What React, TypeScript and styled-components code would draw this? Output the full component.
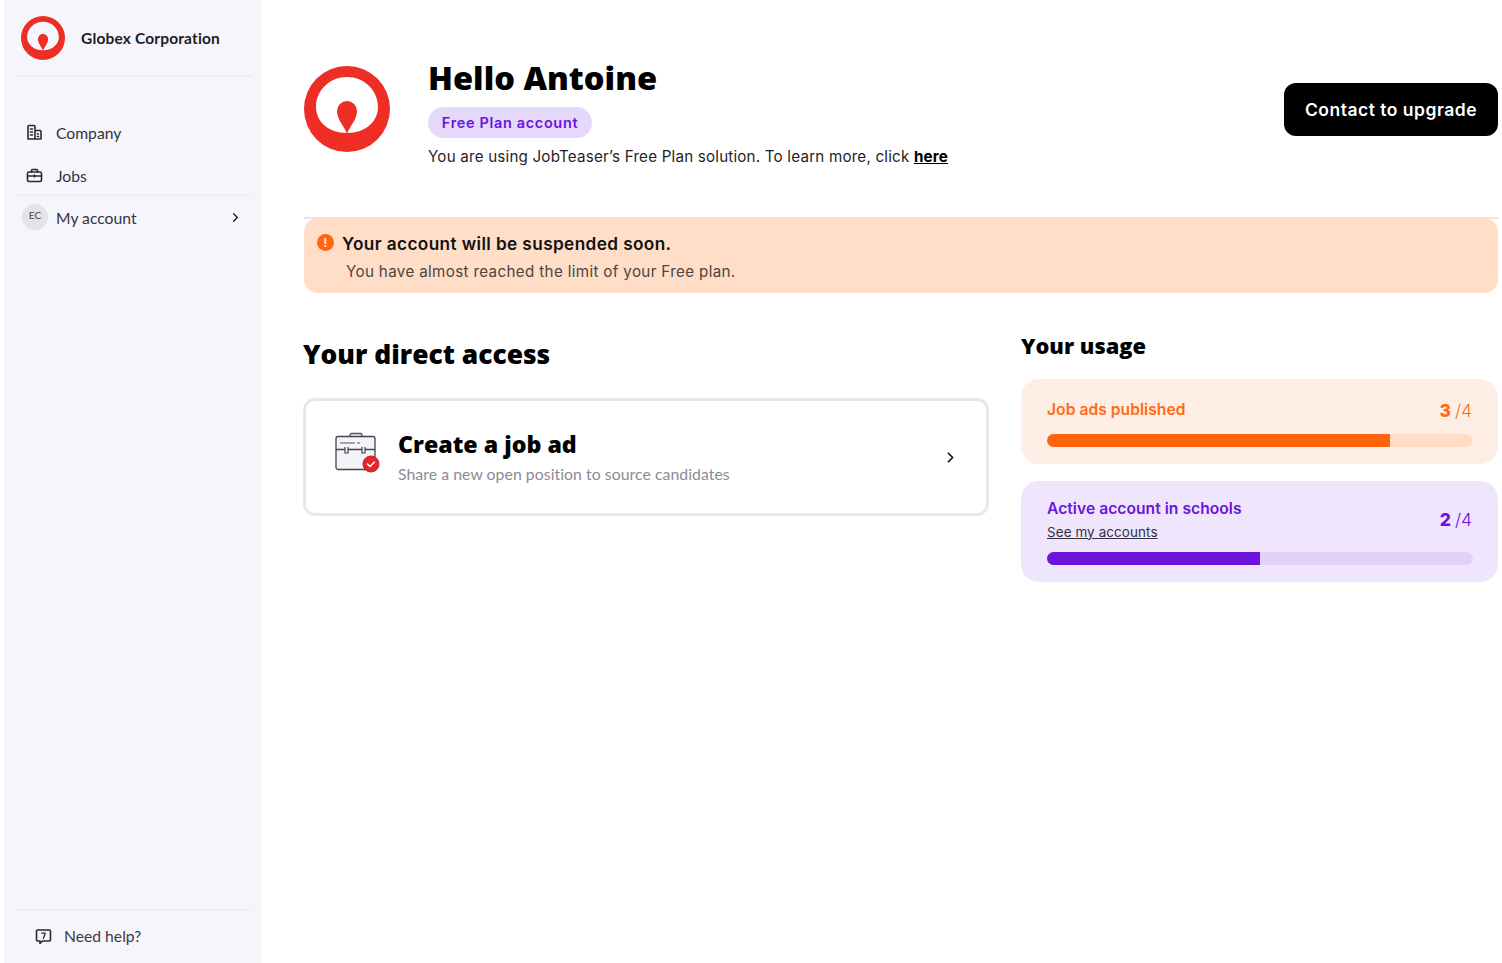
import styled, { createGlobalStyle } from 'styled-components';
import { ChevronRight } from 'lucide-react';

const GlobalStyle = createGlobalStyle`
  html, body {
    margin: 0;
    padding: 0;
    background: #fff;
    color: #000;
    font-family: "Inter", "Liberation Sans", sans-serif;
  }
  * { box-sizing: border-box; }
`;

const Page = styled.div`
  display: flex;
  height: 963px;
  overflow: hidden;
  padding-left: 4px;
`;

const Sidebar = styled.aside`
  display: flex;
  flex-direction: column;
  width: 257px;
  flex-shrink: 0;
  background: #f5f5fb;
  padding: 0 9px 0 10px;
`;

const Brand = styled.div`
  display: flex;
  align-items: center;
  gap: 16px;
  height: 77px;
  padding: 1px 0 0 7px;
  border-bottom: 2px solid #eeeef4;
  font-family: "Lato", sans-serif;
  font-size: 15.5px;
  letter-spacing: 0.16px;
  font-weight: 700;
  color: #1d1d26;
`;

const Nav = styled.nav`
  display: flex;
  flex-direction: column;
  padding-top: 34px;
`;

const NavItem = styled.div<{ $divided?: boolean }>`
  display: flex;
  align-items: center;
  height: ${(p) => (p.$divided ? 42 : 43)}px;
  padding: ${(p) => (p.$divided ? 3 : 0)}px 9px 0 12px;
  gap: 13px;
  font-family: "Lato", sans-serif;
  font-size: 15.7px;
  color: #33333d;
  ${(p) => (p.$divided ? 'border-bottom: 2px solid #eeeef4;' : '')}
`;

const NavIcon = styled.svg`
  width: 17px;
  height: 17px;
  flex-shrink: 0;
  fill: none;
  stroke: #2a2a33;
  stroke-width: 1.6;
  stroke-linecap: round;
  stroke-linejoin: round;
`;

const Avatar = styled.div`
  display: flex;
  align-items: center;
  justify-content: center;
  width: 26px;
  height: 26px;
  margin: -2px -5px 0 -4px;
  border-radius: 50%;
  background: #e3e3e8;
  font-size: 10px;
  color: #44444e;
  padding-bottom: 3px;
`;

const NavLabel = styled.span`
  flex: 1;
`;

const HelpRow = styled.div`
  display: flex;
  align-items: center;
  gap: 12px;
  margin-top: auto;
  height: 54px;
  padding: 0 0 2px 21px;
  border-top: 2px solid #eeeef4;
  font-family: "Lato", sans-serif;
  font-size: 15.7px;
  color: #3a3a44;
`;

const Main = styled.main`
  flex: 1;
  padding: 0 4px 0 43px;
  display: flex;
  flex-direction: column;
`;

const Header = styled.header`
  display: flex;
  align-items: flex-start;
  height: 219px;
  padding-top: 59px;
  border-bottom: 2px solid #e6e6ea;
`;

const HeaderLogo = styled.div`
  margin-top: 7px;
`;

const HeaderText = styled.div`
  display: flex;
  flex-direction: column;
  align-items: flex-start;
  flex: 1;
  margin-left: 38px;
`;

const Hello = styled.h1`
  margin: 0;
  font-family: "Open Sans", sans-serif;
  font-size: 32.6px;
  line-height: 38px;
  font-weight: 800;
`;

const PlanBadge = styled.span`
  display: flex;
  align-items: center;
  justify-content: center;
  width: 164px;
  height: 31px;
  margin-top: 10px;
  border-radius: 16px;
  background: #e5d8fb;
  color: #6a14dc;
  font-size: 14.5px;
  letter-spacing: 0.65px;
  font-weight: 600;
`;

const Intro = styled.p`
  margin: 9px 0 0;
  font-size: 15.2px;
  letter-spacing: 0.19px;
  line-height: 20px;
  color: #1f1f27;
  a {
    color: #000;
    font-weight: 700;
    text-decoration: underline;
  }
`;

const UpgradeButton = styled.button`
  width: 214px;
  height: 53px;
  margin-top: 24px;
  border: none;
  border-radius: 12px;
  background: #000;
  color: #fff;
  font-family: "Inter", sans-serif;
  font-size: 17.5px;
  letter-spacing: 0.5px;
  font-weight: 600;
`;

const Alert = styled.div`
  display: flex;
  flex-direction: column;
  height: 75px;
  border-radius: 14px;
  background: #ffddc7;
  padding: 14px 12px 0 13px;
  margin-top: -1px;
`;

const AlertTitle = styled.div`
  display: flex;
  align-items: center;
  gap: 8px;
  font-size: 17.2px;
  letter-spacing: 0.4px;
  line-height: 24px;
  font-weight: 600;
  color: #111;
`;

const AlertIcon = styled.span`
  display: flex;
  align-items: center;
  justify-content: center;
  width: 17px;
  height: 17px;
  margin-top: -3px;
  border-radius: 50%;
  background: #ff6611;
  color: #ffe3d0;
  font-size: 12px;
  font-weight: 700;
`;

const AlertBody = styled.div`
  margin: 6px 0 0 29px;
  font-size: 15.2px;
  letter-spacing: 0.34px;
  line-height: 20px;
  color: #4b4642;
`;

const Columns = styled.div`
  display: grid;
  grid-template-columns: 686px 477px;
  column-gap: 32px;
  margin: 0 0 0 -1px;
`;

const Column = styled.section`
  display: flex;
  flex-direction: column;
`;

const AccessTitle = styled.h2`
  margin: 42px 0 0;
  font-family: "Open Sans", sans-serif;
  font-size: 26.4px;
  line-height: 38px;
  font-weight: 800;
`;

const AccessCard = styled.div`
  display: flex;
  align-items: center;
  height: 118px;
  margin-top: 25px;
  padding: 0 27px 4px 30px;
  border: 3px solid #e8e8ea;
  border-radius: 12px;
`;

const CardIcon = styled.div`
  display: flex;
  margin: -4px 0 0 -1px;
`;

const CardChevron = styled.div`
  display: flex;
  margin-top: 4px;
`;

const AccessText = styled.div`
  flex: 1;
  margin-left: 17px;
`;

const AccessName = styled.div`
  padding-top: 1px;
  font-family: "Open Sans", sans-serif;
  font-size: 23.2px;
  line-height: 32px;
  font-weight: 800;
`;

const AccessHint = styled.div`
  margin-top: 4px;
  font-family: "Lato", sans-serif;
  font-size: 15.8px;
  letter-spacing: 0.05px;
  line-height: 20px;
  color: #8b8b95;
`;

const UsageTitle = styled.h2`
  margin: 37px 0 0;
  font-family: "Open Sans", sans-serif;
  font-size: 21.8px;
  line-height: 32px;
  font-weight: 800;
`;

const UsageCard = styled.div<{ $bg: string; $h: number; $mt: number }>`
  height: ${(p) => p.$h}px;
  margin-top: ${(p) => p.$mt}px;
  padding: 0 25px 17px 26px;
  border-radius: 18px;
  background: ${(p) => p.$bg};
  display: flex;
  flex-direction: column;
  justify-content: flex-end;
`;

const UsageRow = styled.div<{ $pt: number }>`
  display: flex;
  align-items: center;
  justify-content: space-between;
  flex: 1;
  padding-top: ${(p) => p.$pt}px;
`;

const UsageLabel = styled.div<{ $color: string }>`
  font-size: 15.6px;
  letter-spacing: 0.05px;
  line-height: 22px;
  font-weight: 600;
  color: ${(p) => p.$color};
`;

const AccountsLink = styled.a`
  display: block;
  margin-top: 3px;
  font-size: 13.4px;
  letter-spacing: 0.12px;
  line-height: 18px;
  color: #33313f;
  text-decoration: underline;
`;

const Count = styled.div<{ $color: string }>`
  font-size: 17.5px;
  font-weight: 800;
  color: ${(p) => p.$color};
  margin-right: 1px;
  span {
    margin-left: 4px;
    font-weight: 300;
  }
`;

const Track = styled.div<{ $bg: string }>`
  height: 13px;
  border-radius: 7px;
  background: ${(p) => p.$bg};
  overflow: hidden;
`;

const Fill = styled.div<{ $color: string }>`
  height: 100%;
  background: ${(p) => p.$color};
`;

function GlobexLogo({ size }: { size: number }) {
  return (
    <svg width={size} height={size} viewBox="0 0 86 86" style={{ flexShrink: 0 }}>
      <path
        fillRule="evenodd"
        fill="#ee2e24"
        d="M43 0a43 43 0 1 1 0 86a43 43 0 1 1 0-86zM43 11C26 11 12 24 12 41c0 14 12 26 31 26s31-12 31-26C74 24 60 11 43 11z"
      />
      <path fill="#ee2e24" d="M43 68c-2-7-10-14-10-23a10 10 0 0 1 20 0c0 9-8 16-10 23z" />
    </svg>
  );
}

function BriefcaseCheck() {
  return (
    <svg width="46" height="42" viewBox="0 0 46 42" style={{ flexShrink: 0 }}>
      <path d="M15 5V3a1.5 1.5 0 0 1 1.5-1.5h9A1.500 1.500 0 0 1 27 3v2" fill="#eeeef4" stroke="#55555f" strokeWidth="1.3" />
      <rect x="1" y="4.500" width="39" height="33" rx="2" fill="#f3f3f9" stroke="#44444e" strokeWidth="1.3" />
      <path d="M1 17.500h39" stroke="#44444e" strokeWidth="1.3" />
      <path d="M5 11h15M22 11h3" stroke="#8a8a94" strokeWidth="1.5" />
      <path d="M10 15v6h3v-6M27 15v6h3v-6" fill="#f3f3f9" stroke="#44444e" strokeWidth="1.2" />
      <circle cx="36" cy="32" r="8" fill="#e2272e" stroke="#c92027" strokeWidth="1" />
      <path d="M32.500 32l2.500 2.500 4.500-4.500" fill="none" stroke="#fff" strokeWidth="1.5" strokeLinecap="round" strokeLinejoin="round" />
    </svg>
  );
}

export default function App() {
  return (
    <Page>
      <GlobalStyle />
      <Sidebar>
        <Brand>
          <GlobexLogo size={44} />
          Globex Corporation
        </Brand>
        <Nav>
          <NavItem>
            <NavIcon viewBox="0 0 17 17">
              <path d="M2 15V2.500A1 1 0 0 1 3 1.500h5a1 1 0 0 1 1 1V15zM9 6.500h5a1 1 0 0 1 1 1V15H2M4.500 5h2M4.500 8h2M4.500 11h2M11.500 10h1M11.500 12.500h1" />
            </NavIcon>
            <NavLabel>Company</NavLabel>
          </NavItem>
          <NavItem $divided>
            <NavIcon viewBox="0 0 17 17">
              <rect x="1.500" y="5" width="14" height="9.500" rx="1.500" />
              <path d="M5.500 5V3.500a1 1 0 0 1 1-1h4a1 1 0 0 1 1 1V5M1.500 9h14M8.500 8v2" />
            </NavIcon>
            <NavLabel>Jobs</NavLabel>
          </NavItem>
          <NavItem>
            <Avatar>EC</Avatar>
            <NavLabel>My account</NavLabel>
            <ChevronRight size={15} strokeWidth={2.2} color="#222" />
          </NavItem>
        </Nav>
        <HelpRow>
          <NavIcon viewBox="0 0 17 17">
            <path d="M2.500 2h12a1 1 0 0 1 1 1v9a1 1 0 0 1-1 1H7.500l-2.500 2.500V13H2.500a1 1 0 0 1-1-1V3a1 1 0 0 1 1-1z" />
            <path d="M6.800 5.200h3.400L8.400 10.500" strokeWidth="1.300" />
          </NavIcon>
          Need help?
        </HelpRow>
      </Sidebar>
      <Main>
        <Header>
          <HeaderLogo>
            <GlobexLogo size={86} />
          </HeaderLogo>
          <HeaderText>
            <Hello>Hello Antoine</Hello>
            <PlanBadge>Free Plan account</PlanBadge>
            <Intro>
              You are using JobTeaser’s Free Plan solution. To learn more, click <a>here</a>
            </Intro>
          </HeaderText>
          <UpgradeButton>Contact to upgrade</UpgradeButton>
        </Header>
        <Alert>
          <AlertTitle>
            <AlertIcon>!</AlertIcon>
            Your account will be suspended soon.
          </AlertTitle>
          <AlertBody>You have almost reached the limit of your Free plan.</AlertBody>
        </Alert>
        <Columns>
          <Column>
            <AccessTitle>Your direct access</AccessTitle>
            <AccessCard>
              <CardIcon>
                <BriefcaseCheck />
              </CardIcon>
              <AccessText>
                <AccessName>Create a job ad</AccessName>
                <AccessHint>Share a new open position to source candidates</AccessHint>
              </AccessText>
              <CardChevron>
                <ChevronRight size={17} strokeWidth={2.4} color="#111" />
              </CardChevron>
            </AccessCard>
          </Column>
          <Column>
            <UsageTitle>Your usage</UsageTitle>
            <UsageCard $bg="#ffeee5" $h={85} $mt={17}>
              <UsageRow $pt={7}>
                <UsageLabel $color="#ff6a13">Job ads published</UsageLabel>
                <Count $color="#ff6a13">
                  3<span>/4</span>
                </Count>
              </UsageRow>
              <Track $bg="#ffddc9">
                <Fill $color="#ff640d" style={{ width: `${(343 / 426) * 100}%` }} />
              </Track>
            </UsageCard>
            <UsageCard $bg="#efe5fd" $h={101} $mt={17}>
              <UsageRow $pt={5}>
                <div>
                  <UsageLabel $color="#6a14dc">Active account in schools</UsageLabel>
                  <AccountsLink>See my accounts</AccountsLink>
                </div>
                <Count $color="#6a14dc">
                  2<span>/4</span>
                </Count>
              </UsageRow>
              <Track $bg="#e2d0f8">
                <Fill $color="#6a14dc" style={{ width: '50%' }} />
              </Track>
            </UsageCard>
          </Column>
        </Columns>
      </Main>
    </Page>
  );
}
